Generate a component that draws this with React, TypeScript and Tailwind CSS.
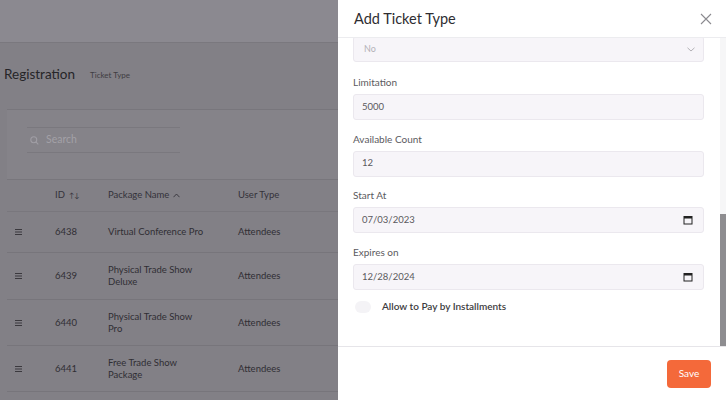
import React from "react";

const font = { fontFamily: "Lato, 'Open Sans', sans-serif" };

function Handle() {
  return (
    <svg width="7" height="6" viewBox="0 0 7 6" className="block">
      <rect x="0" y="0" width="7" height="1" fill="#3b393e" />
      <rect x="0" y="2.5" width="7" height="1" fill="#3b393e" />
      <rect x="0" y="5" width="7" height="1" fill="#3b393e" />
    </svg>
  );
}

function Cal() {
  return (
    <svg width="10" height="10" viewBox="0 0 10 10" className="block">
      <rect x="1" y="1.5" width="8" height="7.5" fill="none" stroke="#222" strokeWidth="1" />
      <rect x="1" y="1.5" width="8" height="2" fill="#222" />
    </svg>
  );
}

const rows = [
  { id: "6438", name: "Virtual Conference Pro", h: "h-[41px]" },
  { id: "6439", name: "Physical Trade Show Deluxe", h: "h-[47px]" },
  { id: "6440", name: "Physical Trade Show Pro", h: "h-[46px]" },
  { id: "6441", name: "Free Trade Show Package", h: "h-[46px]" },
];

function Field({ label, value, date, first }: { label: string; value: string; date?: boolean; first?: boolean }) {
  return (
    <div className={first ? "mt-[14px]" : "mt-[12.6px]"}>
      <div className="h-[12px] text-[10px] leading-[12px] text-[#5b5a5e]">{label}</div>
      <div className="mt-[6px] flex h-[26px] items-center justify-between rounded-[3px] border border-[#ebe8ee] bg-[#f7f5f9] pl-[8px] pr-[10px]">
        <span className="text-[9.5px] text-[#5a595d]">{value}</span>
        {date && <Cal />}
      </div>
    </div>
  );
}

export default function App() {
  return (
    <div className="relative h-[400px] w-[726px] overflow-hidden bg-[#828086]" style={font}>
      {/* Dimmed page */}
      <div className="flex h-full flex-col">
        <div className="h-[43px] border-b border-[#7a787e] bg-[#8b8990]" />
        <div className="flex h-[66px] items-center gap-[15px] pl-[4px] pb-[3px]">
          <span className="text-[13.5px] text-[#262528]">Registration</span>
          <span className="mt-[1px] text-[8px] text-[#3f3d42]">Ticket Type</span>
        </div>
        <div className="mx-[7px] h-[71px] border-y border-[#78767c] bg-[#858389] pt-[17px] pl-[20px]">
          <div className="flex h-[26px] w-[153px] items-center gap-[7px] border-y border-[#7a787e] pl-[3px]">
            <svg width="9" height="9" viewBox="0 0 10 10">
              <circle cx="4.2" cy="4.2" r="3.3" fill="none" stroke="#a09ea5" strokeWidth="1.2" />
              <line x1="6.6" y1="6.6" x2="9.2" y2="9.2" stroke="#a09ea5" strokeWidth="1.2" />
            </svg>
            <span className="text-[10.5px] text-[#a3a1a7]">Search</span>
          </div>
        </div>
        <div className="mx-[7px] flex h-[32px] items-center border-b border-[#79777d] text-[9.5px] text-[#34323a]">
          <div className="w-[48px]" />
          <div className="flex w-[53px] items-center gap-[4px]">
            <span>ID</span>
            <span className="text-[7px]">↑↓</span>
          </div>
          <div className="flex w-[130px] items-center gap-[4px]">
            <span>Package Name</span>
            <svg width="7" height="5" viewBox="0 0 7 5"><path d="M0.5 4.2 L3.5 1 L6.5 4.2" fill="none" stroke="#34323a" strokeWidth="0.9" /></svg>
          </div>
          <div>User Type</div>
        </div>
        {rows.map((r) => (
          <div key={r.id} className={`mx-[7px] flex ${r.h} items-center border-b border-[#77757b] text-[9.5px] leading-[12px] text-[#302e34]`}>
            <div className="w-[48px] pl-[8px]"><Handle /></div>
            <div className="w-[53px]">{r.id}</div>
            <div className="w-[130px]"><div className="w-[99px]">{r.name}</div></div>
            <div>Attendees</div>
          </div>
        ))}
      </div>

      {/* Drawer */}
      <div className="absolute right-0 top-0 flex h-[400px] w-[388px] flex-col bg-white">
        <div className="flex h-[38px] items-center justify-between border-b border-[#ececef] pl-[16px] pr-[14px]">
          <span className="text-[14.5px] text-[#2e2d31]">Add Ticket Type</span>
          <svg width="12" height="12" viewBox="0 0 12 12">
            <path d="M1 1 L11 11 M11 1 L1 11" stroke="#8b8a8f" strokeWidth="1.1" />
          </svg>
        </div>
        <div className="flex h-[309px] border-b border-[#e6e5e9]">
          <div className="flex-1 overflow-hidden pl-[15px] pr-[16px]">
            <div className="-mt-[2px] flex h-[26px] items-center justify-between rounded-[3px] border border-[#ebe8ee] bg-[#f7f5f9] pl-[10px] pr-[8px]">
              <span className="text-[9px] text-[#b4b2b8]">No</span>
              <svg width="8" height="5" viewBox="0 0 8 5"><path d="M0.5 0.8 L4 4 L7.5 0.8" fill="none" stroke="#aaa8ae" strokeWidth="0.9" /></svg>
            </div>
            <Field label="Limitation" value="5000" first />
            <Field label="Available Count" value="12" />
            <Field label="Start At" value="07/03/2023" date />
            <Field label="Expires on" value="12/28/2024" date />
            <div className="mt-[9px] flex h-[16px] items-center gap-[11px] pl-[2px]">
              <div className="h-[12px] w-[16px] rounded-full bg-[#f4f3f6]" />
              <span className="text-[10px] font-semibold text-[#3d3c40]">Allow to Pay by Installments</span>
            </div>
          </div>
          <div className="flex w-[6px] flex-col bg-[#f6f6f7]">
            <div className="h-[176px]" />
            <div className="h-[132px] bg-[#8e8d90]" />
          </div>
        </div>
        <div className="flex flex-1 items-center justify-end pr-[15px]">
          <button className="h-[28px] w-[44px] rounded-[4px] bg-[#f4693a] text-[10px] text-white">Save</button>
        </div>
      </div>
    </div>
  );
}
